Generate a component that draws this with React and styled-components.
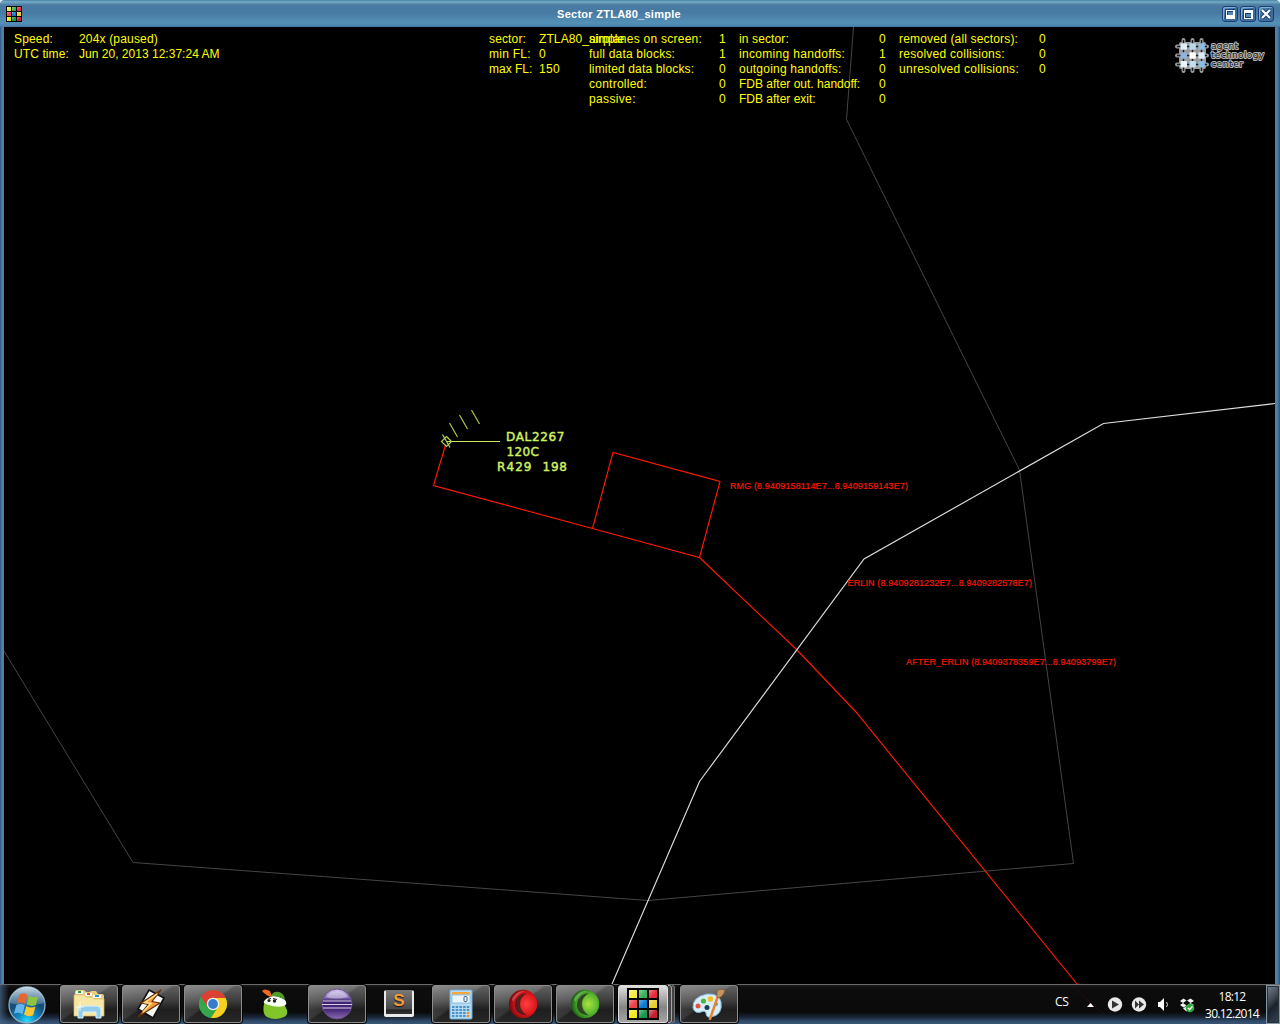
import React from 'react';
import styled, { createGlobalStyle, css } from 'styled-components';

const Global = createGlobalStyle`
  html, body { margin: 0; background: #dfe6ec; }
  * { box-sizing: border-box; }
`;

const Desktop = styled.div`
  width: 1280px;
  height: 1024px;
  display: flex;
  flex-direction: column;
  overflow: hidden;
  font-family: 'Liberation Sans', Arial, sans-serif;
`;

const Window = styled.div`
  flex: 1;
  display: flex;
  flex-direction: column;
  min-height: 0;
  border-radius: 5px 5px 0 0;
  background: linear-gradient(90deg, #34557f 0, #5084ac 2px, #4a7ca7 4px, #4a7ca7 1275px, #5084ac 1277px, #2c527b 1280px);
`;

const TitleBar = styled.header`
  height: 27px;
  flex: none;
  display: grid;
  grid-template-columns: 60px 1fr 60px;
  align-items: center;
  padding: 0 6px;
  border-radius: 5px 5px 0 0;
  background: linear-gradient(180deg, #4c819f 0, #5d9abb 1px, #75adc6 2px, #5687a9 4px, #487aa2 6px, #487ba3 13px, #5088b0 19px, #5390b6 23px, #4c83ac 26px, #3e7097 27px);
`;

const Title = styled.h1`
  margin: 1px 42px 0 0;
  text-align: center;
  color: #fff;
  font-size: 11px;
  line-height: 14px;
  font-weight: bold;
  letter-spacing: 0.26px;
`;

const Controls = styled.div`
  display: flex;
  gap: 2px;
  justify-content: flex-end;
`;

const ControlButton = styled.button`
  width: 16px;
  height: 16px;
  padding: 0;
  display: grid;
  place-items: center;
  border: 1px solid #1c3d78;
  border-radius: 3px;
  background: linear-gradient(135deg, #6aa0c6, #3d6d9d 40%, #3b6a9a);
  box-shadow: inset 1px 1px 0 #7cb0cf;
  svg { display: block; }
`;

const Radar = styled.main`
  position: relative;
  flex: 1;
  min-height: 0;
  margin: 0 5px 0 4px;
  background: #000;
`;

const Map = styled.svg`
  display: block;
  width: 1271px;
  height: 957px;
`;

const Hud = styled.section`
  position: absolute;
  top: 5px;
  left: 10px;
  display: flex;
  color: #ffff00;
  font-size: 12px;
  line-height: 15px;
  white-space: pre;
`;

const Block = styled.dl`
  display: grid;
  grid-template-columns: ${p => p.$label}px ${p => p.$value}px;
  grid-auto-rows: 15px;
  align-content: start;
  margin: 0;
  width: ${p => p.$width}px;
`;

const Label = styled.dt`
  letter-spacing: ${p => p.$ls || 0}px;
`;

const Value = styled.dd`
  margin: 0;
  letter-spacing: ${p => p.$ls || 0}px;
`;

const Brand = styled.div`
  position: absolute;
  top: 10px;
  left: 1170px;
`;

const Taskbar = styled.footer`
  height: 40px;
  flex: none;
  display: flex;
  align-items: flex-start;
  border-top: 1px solid #6b6b6b;
  background:
    linear-gradient(90deg, rgba(70, 100, 135, .75) 0, rgba(60, 85, 115, 0) 9px),
    linear-gradient(42deg, transparent 0, transparent 49%, rgba(120, 20, 10, .3) 50%, transparent 51%) 1070px 0 / 36px 30px no-repeat,
    linear-gradient(180deg, #1b1b1b 0, #0d0d0d 3px, #0a0a0a 27px, #182433 32px, #2f4967 36px, #3d5a7c 40px);
`;

const Start = styled.button`
  width: 60px;
  height: 39px;
  padding: 0 0 0 7px;
  border: 0;
  background: none;
  text-align: left;
  svg { display: block; }
`;

const Tasks = styled.nav`
  display: flex;
  gap: 4px;
  flex: 1;
`;

const framed = css`
  border-color: #8c8c8c;
  background:
    linear-gradient(145deg, rgba(255, 255, 255, .2) 0, rgba(255, 255, 255, .08) 44%, rgba(0, 0, 0, .12) 48%),
    linear-gradient(180deg, #6e6e6e 0, #464646 40%, #222 65%, #2c2c2c 100%);
  box-shadow: 0 0 0 1px #060606;
`;

const active = css`
  border-color: #ddd;
  background: linear-gradient(180deg, #dedede 0, #aaa 35%, #858585 60%, #a5a5a5 100%);
  box-shadow: 0 0 0 1px #060606;
`;

const Task = styled.button`
  width: ${p => (p.$kind === 'active' ? 50 : 58)}px;
  height: 38px;
  padding: 0;
  display: grid;
  place-items: center;
  border: 1px solid transparent;
  border-radius: 3px;
  background: none;
  ${p => p.$kind === 'open' && framed}
  ${p => p.$kind === 'active' && active}
  svg { display: block; }
`;

const Stack = styled.div`
  display: flex;
  width: 58px;
`;

const StackEdge = styled.span`
  width: ${p => p.$w}px;
  height: 38px;
  border: 1px solid ${p => p.$c};
  border-left: 0;
  border-radius: 0 3px 3px 0;
  background: #444;
`;

const Tray = styled.aside`
  display: flex;
  align-items: center;
  height: 39px;
  color: #fff;
  font-family: 'Open Sans', 'Noto Sans', sans-serif;
`;

const Lang = styled.span`
  width: 31px;
  margin-top: -6px;
  font-size: 12px;
  letter-spacing: -0.2px;
`;

const TrayIcons = styled.div`
  width: 119px;
  height: 39px;
`;

const Clock = styled.time`
  width: 54px;
  display: flex;
  flex-direction: column;
  align-items: center;
  margin-right: 7px;
  font-size: 12px;
  line-height: 17px;
  letter-spacing: -0.72px;
  white-space: nowrap;
`;

const ShowDesktop = styled.button`
  width: 14px;
  height: 39px;
  padding: 0;
  border: 1px solid #8496a6;
  background: linear-gradient(135deg, #77838e 0, #3b434c 40%, #1b222b 55%, #33465b 100%);
  box-shadow: inset 0 0 0 1px #29323b;
`;

const cubeColors = [
  ['#f4ea42', '#38b058', '#e52b36'],
  ['#ee4148', '#087bd0', '#e8d02c'],
  ['#f4e61c', '#15994a', '#c3202c'],
];

const Cube = ({ size }) => (
  <svg width={size} height={size} viewBox="0 0 32 32">
    <defs>
      <linearGradient id="cubeShine" x1="0" y1="0" x2="1" y2="1">
        <stop offset="0" stopColor="#fff" stopOpacity=".4" />
        <stop offset=".6" stopColor="#fff" stopOpacity="0" />
      </linearGradient>
    </defs>
    <rect width="32" height="32" fill="#000" />
    {cubeColors.map((row, y) => row.map((c, x) => (
      <g key={`${x}${y}`}>
        <rect x={2 + x * 10} y={2 + y * 10} width="8" height="8" fill={c} />
        <rect x={2 + x * 10} y={2 + y * 10} width="8" height="8" fill="url(#cubeShine)" />
      </g>
    )))}
  </svg>
);

const StartOrb = () => (
  <svg width="40" height="38" viewBox="0 0 40 38">
    <defs>
      <radialGradient id="orb" cx=".5" cy=".95" r=".85">
        <stop offset="0" stopColor="#28dcff" />
        <stop offset=".3" stopColor="#0c8ecb" />
        <stop offset=".65" stopColor="#174c78" />
        <stop offset="1" stopColor="#2c5c86" />
      </radialGradient>
      <linearGradient id="orbTop" x1="0" y1="0" x2="0" y2="1">
        <stop offset="0" stopColor="#e0edf3" stopOpacity=".85" />
        <stop offset="1" stopColor="#9bb9cb" stopOpacity=".3" />
      </linearGradient>
    </defs>
    <circle cx="20" cy="19" r="18" fill="url(#orb)" stroke="#8eb0c4" strokeWidth="1.3" />
    <path d="M3 17a17 16 0 0 1 34 0Q20 22 3 17Z" fill="url(#orbTop)" />
    <path d="M12.500 8.500q5-2.500 8 .5l-2.300 9q-4-2.500-8.400-.5Z" fill="#e7682f" />
    <path d="M22 9.500q4 2.800 9.200.8l-2.300 8.700q-4.500 2.200-9.200-.7Z" fill="#8dc440" />
    <path d="M9.400 19q4.500-2.200 8.400.5l-2.300 8.700q-4-2.600-8.500-.5Z" fill="#66b6ed" />
    <path d="M19.300 20q4.500 2.700 9.200.6l-2.300 8.600q-4.500 2.200-9.200-.6Z" fill="#fbc530" />
  </svg>
);

const Explorer = () => (
  <svg width="34" height="32" viewBox="0 0 34 32">
    <path d="M3 4q0-2 2-2h7l2 2h4l1-1h5l2 3h4q2 0 2 2v20H2Z" fill="#e9ce7f" />
    <path d="M4 3h7v3H4Z" fill="#fff" /><rect x="6" y="3" width="3" height="2" fill="#1b9e3b" />
    <path d="M13 5h7v3h-7Z" fill="#fff" /><rect x="15" y="5" width="3" height="2" fill="#d7432d" />
    <path d="M21 7h8v3h-8Z" fill="#fff" /><rect x="23" y="7" width="4" height="2" fill="#2592dc" />
    <path d="M2 7h10l2 2h6l2 2h10v17H2Z" fill="#f8e6a4" stroke="#d8b968" strokeWidth=".7" />
    <path d="M6 30v-8q0-4 4-4h15q4 0 4 4v8h-5v-6H11v6Z" fill="#92cdeb" stroke="#d7f3ff" />
    <path d="M8 14v9M4 19h8" stroke="#fff" opacity=".8" />
  </svg>
);

const Winamp = () => (
  <svg width="32" height="32" viewBox="0 0 32 32">
    <path d="M14 2 29 10 18 30 3 21Z" fill="#f6f6f6" stroke="#111" strokeWidth="1.600" strokeLinejoin="round" />
    <path d="M26 2 6 15l7 1.500L3 29l22-14-8-1.500Z" fill="#f89a2f" stroke="#632d09" strokeWidth="1.200" strokeLinejoin="round" />
    <path d="M22 6 10 14.500l6 1L8 24" fill="none" stroke="#ffdf94" strokeWidth="1.500" />
  </svg>
);

const Chrome = () => (
  <svg width="30" height="30" viewBox="0 0 30 30">
    <circle cx="15" cy="15" r="14" fill="#2fa94b" />
    <path d="M2.900 8A14 14 0 0 0 13 28.900L20 18 15 15 8 17Z" fill="#35a64a" />
    <path d="M15 9h12.600A14 14 0 0 1 13 28.900L20 18Z" fill="#fbcf22" />
    <path d="M2.900 8A14 14 0 0 1 27.600 9H15L9 17Z" fill="#dc4035" />
    <circle cx="15" cy="15" r="6.200" fill="#f3f3f3" />
    <circle cx="15" cy="15" r="4.900" fill="#367cca" />
  </svg>
);

const Limey = () => (
  <svg width="30" height="32" viewBox="0 0 30 32">
    <path d="M4 16Q9 12 15 13q9 0 12 9 1 5-3 7-9 4-17 0-5-3-3-13Z" fill="#82c52a" />
    <path d="M5 12q8-8 20 0 3 4-1 6-9 2-18-2-4-1-1-4Z" fill="#f8fff2" />
    <path d="M11 8q2-5 8-4 5 1 6 8-6-4-14-4Z" fill="#529a26" />
    <path d="M2 3q2-3 8 0l2 6-4-1-4-3Z" fill="#f16a21" />
    <circle cx="9" cy="12.500" r="1.600" fill="#222" /><circle cx="14.500" cy="13" r="1.700" fill="#222" />
    <path d="M7 9.500l4 1m2 0 4 1" stroke="#222" />
  </svg>
);

const Eclipse = () => (
  <svg width="32" height="32" viewBox="0 0 32 32">
    <defs>
      <linearGradient id="ecl" x1="0" y1="0" x2="0" y2="1">
        <stop offset="0" stopColor="#d1c7ea" /><stop offset=".28" stopColor="#8570b3" />
        <stop offset=".4" stopColor="#3c236c" /><stop offset=".7" stopColor="#4a2a78" />
        <stop offset="1" stopColor="#8a6fb4" />
      </linearGradient>
    </defs>
    <circle cx="16" cy="16" r="15" fill="url(#ecl)" stroke="#6d4d92" />
    <path d="M2 13h28M1 16.500h30M2 20h28" stroke="#d9cdec" strokeWidth="1.200" />
    <path d="M5 9a13 13 0 0 1 22 0Q15 12 5 9Z" fill="#f5f2ff" opacity=".4" />
  </svg>
);

const SublimeFrame = styled.span`
  display: grid;
  place-items: start center;
  width: 30px;
  height: 27px;
  margin-bottom: 2px;
  border: 2px solid #e9e9e9;
  border-top: 1px solid #777;
  border-bottom-width: 3px;
  border-radius: 2px;
  background: linear-gradient(180deg, #777 0, #484848 78%, #222 82%, #333 100%);
  color: #f69a36;
  font: bold 17px/20px 'Liberation Sans', sans-serif;
  text-shadow: 0 1px 1px #111;
`;

const Calculator = () => (
  <svg width="24" height="31" viewBox="0 0 24 31">
    <rect x="1" y="1" width="22" height="29" rx="1" fill="#b4dbf3" stroke="#6daad5" />
    <rect x="3" y="3" width="18" height="2.500" fill="#f5a83d" />
    <rect x="3" y="6" width="18" height="8" fill="#e8f6fc" stroke="#76add2" strokeWidth=".7" />
    <rect x="15" y="7.500" width="3" height="5" rx="1" fill="none" stroke="#355f7d" />
    {[0, 1, 2, 3].map(y => [0, 1, 2, 3, 4].map(x => (
      <rect key={`${x}${y}`} x={3 + x * 3.7} y={17 + y * 3} width="2.500" height="2" fill={x === 4 && y > 1 ? '#f28a22' : '#4b91c4'} />
    )))}
  </svg>
);

const Ball = ({ id, light, mid, dark }) => (
  <svg width="30" height="30" viewBox="0 0 30 30">
    <defs>
      <radialGradient id={id} cx=".62" cy=".5" r=".6">
        <stop offset="0" stopColor={light} /><stop offset=".65" stopColor={mid} /><stop offset="1" stopColor={dark} />
      </radialGradient>
    </defs>
    <circle cx="15" cy="15" r="14.200" fill={`url(#${id})`} />
    <path d="M19 4Q8 5 7 15t12 11.500Q12 22 12 15T19 4Z" fill="#222" opacity=".75" />
    <path d="M4 10Q9 1 17 2 8 5 5 13Z" fill="#fff" opacity=".25" />
  </svg>
);

const Palette = () => (
  <svg width="34" height="32" viewBox="0 0 34 32">
    <path d="M15 6q12-1 14 8 2 13-10 15-5 1-5-4-1-3-5-1-6 2-8-4Q0 9 15 6Z" fill="#d8effb" stroke="#82b9dc" />
    <circle cx="15" cy="19.500" r="2.500" fill="#1e3d54" />
    <circle cx="6" cy="18" r="2.500" fill="#e9513a" /><circle cx="11.500" cy="13" r="2.600" fill="#51b636" />
    <circle cx="18.500" cy="11" r="2.800" fill="#f7bd25" /><circle cx="24" cy="16" r="2" fill="#559bd6" />
    <path d="m18 31 8-23" stroke="#e88330" strokeWidth="2.500" strokeLinecap="round" />
    <path d="M25 9V4q1-4 8-2-1 6-6 8Z" fill="#c49462" stroke="#7c4e2a" strokeWidth=".6" />
  </svg>
);

const MinIcon = () => (
  <svg width="12" height="12" shapeRendering="crispEdges">
    <rect x="1" y="1" width="10" height="10" fill="#173e79" />
    <rect x="2" y="2" width="9" height="9" fill="#fff" />
    <rect x="3" y="3" width="6" height="4" fill="#173e79" />
    <rect x="4" y="4" width="5" height="3" fill="#4f86b3" />
  </svg>
);
const MaxIcon = () => (
  <svg width="12" height="12" shapeRendering="crispEdges">
    <rect x="1" y="1" width="10" height="10" fill="#173e79" />
    <rect x="2" y="2" width="9" height="9" fill="#fff" />
    <rect x="3" y="5" width="6" height="5" fill="#173e79" />
    <rect x="4" y="6" width="5" height="3" fill="#4f86b3" />
  </svg>
);
const CloseIcon = () => (
  <svg width="12" height="12"><path d="m2 2 8 8m0-8-8 8" stroke="#173e79" strokeWidth="4" /><path d="m2 2 8 8m0-8-8 8" stroke="#fff" strokeWidth="2.200" /></svg>
);

const logoCells = ['#dceef8', '#b9d9ef', '#8fbce4', '#8fb5df', '#ffffff', '#dceaf8', '#e6f4fb', '#c2def3', '#8dbbe2'];

const BrandLogo = () => (
  <svg width="94" height="38" viewBox="1174 37 94 38">
    <path d="M1177 46.500h30M1177 55.500h30M1177 64.500h30M1183.500 40v31M1192.500 40v31M1201.500 40v31" stroke="#9c9c9c" strokeWidth="4" strokeLinecap="round" />
    <rect x="1179" y="42" width="27" height="27" rx="2" fill="#9c9c9c" />
    <path d="M1177 46.500h30M1177 55.500h30M1177 64.500h30M1183.500 40v31M1192.500 40v31M1201.500 40v31" stroke="#1d1d1d" strokeWidth="1.400" />
    {logoCells.map((c, i) => (
      <rect key={i} x={1180.5 + (i % 3) * 8.9} y={43.3 + Math.floor(i / 3) * 8.9} width="6.500" height="6.500" rx=".8" fill={c} />
    ))}
    <g fontFamily="DejaVu Sans, sans-serif" fontSize="9" fill="#151515" stroke="#b4b4b4" strokeWidth="2" strokeLinejoin="round" paintOrder="stroke">
      <text x="1211" y="49" textLength="27">agent</text>
      <text x="1211" y="58" textLength="53">technology</text>
      <text x="1211" y="66.500" textLength="32">center</text>
    </g>
  </svg>
);

const TrayGlyphs = () => (
  <svg width="119" height="39" viewBox="1085 985 119 39">
    <path d="M1086 1007l3.500-4 3.500 4Z" fill="#fff" />
    <circle cx="1114" cy="1004.500" r="7.200" fill="#e9e9e9" /><path d="M1111 1000.500v8l7-4Z" fill="#333" />
    <circle cx="1138" cy="1004.500" r="7.200" fill="#e9e9e9" /><path d="M1134 1000.500v8l4-4v4l5-4-5-4v4Z" fill="#333" />
    <path d="M1157 1002h2l4-4v13l-4-4h-2Z" fill="#fff" />
    <path d="M1165.500 1002q2 2.500 0 5" stroke="#ddd" fill="none" />
    <path d="m1179 1001 3.500-2.500 3 2-3.500 2.500Zm7-.5 3.500-2 3.500 2.500-3.500 2ZM1179 1005l3-2 3.500 2.500-3 2Zm3 3.500 3.500-2.500 3.500 2.500-3.500 3ZM1186 1005.500l3.500-2.500 3.500 2-3.500 2.500Z" fill="#f2f2f2" />
    <circle cx="1189" cy="1008" r="4.300" fill="#2eaa3a" />
    <path d="m1187 1008 1.500 1.700 3-3.400" stroke="#fff" strokeWidth="1.300" fill="none" />
  </svg>
);

const RadarMap = () => (
  <Map viewBox="4 27 1271 957">
    <g fill="none" strokeWidth="1">
      <path stroke="#454545" d="M853.500 27 846.500 119.500 1019.500 470 1073.500 863.500 648 900.500 133 862.500 4 651" />
      <path stroke="#ff1a00" strokeWidth="1.150" d="M445.500 445 433.500 485.500 592.500 528.500 699.500 557.500 720 481.500 613 452.500 592.500 528.500M699.500 557.500 797 650 856 712 1077 984" />
      <path stroke="#dedede" strokeWidth="1.150" d="M612 984 699.500 781.500 864 559 1103.500 423.500 1275 403.500" />
      <path stroke="#a9c94b" strokeWidth="1.200" d="m471.500 410 8 14M459.500 415l8 14M449.500 423l8 14" />
      <path stroke="#cbea5c" d="M446 441.500h54" />
      <path stroke="#b4d452" strokeWidth="1.200" d="m446.500 436.500 5 5-5 5-5-5ZM442.500 434.500l7.500 13" />
    </g>
    <g fill="#d0f060" stroke="#d0f060" strokeWidth=".45" fontFamily="DejaVu Sans, Verdana, sans-serif" fontSize="12">
      <text x="506" y="441" textLength="58.500">DAL2267</text>
      <text x="506.500" y="456" textLength="32.500">120C</text>
      <text x="497" y="471" textLength="34.500">R429</text>
      <text x="542.500" y="471" textLength="24.500">198</text>
    </g>
    <g fill="#ff1a00" stroke="#ff1a00" strokeWidth=".15" fontFamily="Liberation Sans, Arial, sans-serif" fontSize="9">
      <text x="730" y="489" textLength="178">RMG (8.9409158114E7...8.9409159143E7)</text>
      <text x="847.500" y="586" textLength="184.500">ERLIN (8.9409281232E7...8.9409282578E7)</text>
      <text x="906" y="665" textLength="210">AFTER_ERLIN (8.9409378359E7...8.94093799E7)</text>
    </g>
  </Map>
);

const blocks = [
  { label: 65, value: 410, width: 475, rows: [['Speed:', '204x (paused)', .17, .17], ['UTC time:', 'Jun 20, 2013 12:37:24 AM', .1, .02]] },
  { label: 50, value: 50, width: 100, rows: [['sector:', 'ZTLA80_simple', .15, .1], ['min FL:', '0', .25], ['max FL:', '150', 0, .3]] },
  { label: 130, value: 20, width: 150, rows: [['airplanes on screen:', '1', .25], ['full data blocks:', '1', .2], ['limited data blocks:', '0', .16], ['controlled:', '0', .25], ['passive:', '0', .35]] },
  { label: 140, value: 20, width: 160, rows: [['in sector:', '0', .12], ['incoming handoffs:', '1', .32], ['outgoing handoffs:', '0', .22], ['FDB after out. handoff:', '0', 0], ['FDB after exit:', '0', 0]] },
  { label: 140, value: 20, width: 160, rows: [['removed (all sectors):', '0', .17], ['resolved collisions:', '0', .26], ['unresolved collisions:', '0', .27]] },
];

const tasks = [
  { icon: <Explorer />, kind: 'open' },
  { icon: <Winamp />, kind: 'open' },
  { icon: <Chrome />, kind: 'open' },
  { icon: <Limey />, kind: 'pinned' },
  { icon: <Eclipse />, kind: 'open' },
  { icon: <SublimeFrame>S</SublimeFrame>, kind: 'pinned' },
  { icon: <Calculator />, kind: 'open' },
  { icon: <Ball id="redBall" light="#ff4040" mid="#d81318" dark="#78090c" />, kind: 'open' },
  { icon: <Ball id="greenBall" light="#a9e340" mid="#4fae2c" dark="#175d15" />, kind: 'open' },
  { icon: <Cube size={32} />, kind: 'active' },
  { icon: <Palette />, kind: 'open' },
];

export default function App() {
  return (
    <Desktop>
      <Global />
      <Window>
        <TitleBar>
          <Cube size={16} />
          <Title>Sector ZTLA80_simple</Title>
          <Controls>
            <ControlButton><MinIcon /></ControlButton>
            <ControlButton><MaxIcon /></ControlButton>
            <ControlButton><CloseIcon /></ControlButton>
          </Controls>
        </TitleBar>
        <Radar>
          <RadarMap />
          <Hud>
            {blocks.map((b, i) => (
              <Block key={i} $label={b.label} $value={b.value} $width={b.width}>
                {b.rows.map(([label, value, ls, vls]) => (
                  <React.Fragment key={label}>
                    <Label $ls={ls}>{label}</Label>
                    <Value $ls={vls}>{value}</Value>
                  </React.Fragment>
                ))}
              </Block>
            ))}
          </Hud>
          <Brand><BrandLogo /></Brand>
        </Radar>
      </Window>
      <Taskbar>
        <Start><StartOrb /></Start>
        <Tasks>
          {tasks.map((t, i) => (t.kind === 'active' ? (
            <Stack key={i}>
              <Task $kind="active">{t.icon}</Task>
              <StackEdge $w={4} $c="#a5a5a5" />
              <StackEdge $w={3} $c="#777" />
            </Stack>
          ) : <Task key={i} $kind={t.kind}>{t.icon}</Task>))}
        </Tasks>
        <Tray>
          <Lang>CS</Lang>
          <TrayIcons><TrayGlyphs /></TrayIcons>
          <Clock><span>18:12</span><span>30.12.2014</span></Clock>
          <ShowDesktop />
        </Tray>
      </Taskbar>
    </Desktop>
  );
}
